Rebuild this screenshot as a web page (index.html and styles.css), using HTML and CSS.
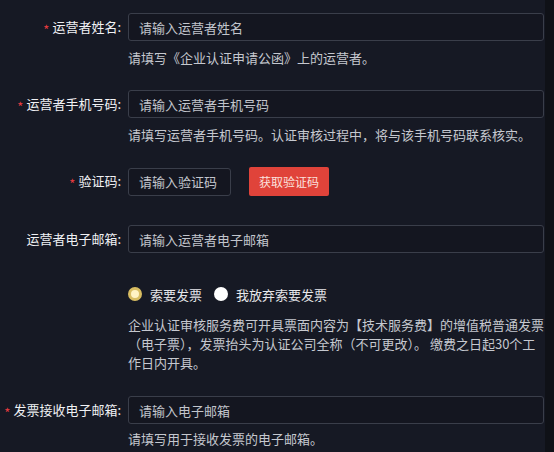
FILE: index.html
```html
<!DOCTYPE html>
<html lang="zh-CN">
<head>
    <meta charset="UTF-8">
    <meta name="viewport" content="width=device-width, initial-scale=1.0">
    <title>企业认证</title>
    <link rel="stylesheet" href="styles.css">
</head>
<body>
    <div class="page">
        <form class="form">
            <!-- 运营者姓名 -->
            <div class="form-item">
                <label class="form-label"><span class="required">*</span>运营者姓名:</label>
                <div class="form-control">
                    <input type="text" class="input" placeholder="请输入运营者姓名">
                    <div class="help">请填写《企业认证申请公函》上的运营者。</div>
                </div>
            </div>

            <!-- 手机号码 -->
            <div class="form-item">
                <label class="form-label"><span class="required">*</span>运营者手机号码:</label>
                <div class="form-control">
                    <input type="text" class="input" placeholder="请输入运营者手机号码">
                    <div class="help">请填写运营者手机号码。认证审核过程中，将与该手机号码联系核实。</div>
                </div>
            </div>

            <!-- 验证码 -->
            <div class="form-item item-code">
                <label class="form-label"><span class="required">*</span>验证码:</label>
                <div class="form-control code-row">
                    <input type="text" class="input input-code" placeholder="请输入验证码">
                    <button type="button" class="btn-code">获取验证码</button>
                </div>
            </div>

            <!-- 电子邮箱 -->
            <div class="form-item item-email">
                <label class="form-label">运营者电子邮箱:</label>
                <div class="form-control">
                    <input type="text" class="input" placeholder="请输入运营者电子邮箱">
                </div>
            </div>

            <!-- 发票 -->
            <div class="form-item item-invoice">
                <div class="form-label"></div>
                <div class="form-control">
                    <div class="radio-group">
                        <label class="radio"><span class="radio-dot checked"></span>索要发票</label>
                        <label class="radio"><span class="radio-dot"></span>我放弃索要发票</label>
                    </div>
                    <div class="invoice-note">企业认证审核服务费可开具票面内容为【技术服务费】的增值税普通发票（电子票），发票抬头为认证公司全称（不可更改）。 缴费之日起30个工作日内开具。</div>
                </div>
            </div>

            <!-- 发票邮箱 -->
            <div class="form-item">
                <label class="form-label"><span class="required">*</span>发票接收电子邮箱:</label>
                <div class="form-control">
                    <input type="text" class="input" placeholder="请输入电子邮箱">
                    <div class="help help-last">请填写用于接收发票的电子邮箱。</div>
                </div>
            </div>
        </form>
    </div>
</body>
</html>
```

FILE: styles.css
```css
body {
    margin: 0;
    background-color: #0f1117; /* dunkler Rand rechts */
    font-family: "Noto Sans CJK SC", "Noto Sans", sans-serif;
    font-size: 13px;
    color: #e6e7ea;
}

.page {
    width: 545px;
    min-height: 452px;
    background-color: #161924;
    box-sizing: border-box;
    padding-top: 13px;
}

.form-item {
    display: flex;
    align-items: flex-start;
    margin-bottom: 22px;
}

.form-label {
    width: 128px;
    flex-shrink: 0;
    box-sizing: border-box;
    padding-right: 7px;
    text-align: right;
    line-height: 28px;
    color: #f0f1f4;
    white-space: nowrap;
}

.required {
    display: inline-block;
    color: #e23a3f;
    font-size: 13px;
    line-height: 13px;
    vertical-align: -3px;
    margin-right: 3px;
}

.form-control {
    width: 416px;
}

.input {
    display: block;
    width: 100%;
    height: 28px;
    box-sizing: border-box;
    padding: 0 10px;
    border: 1px solid #3a3e4a;
    border-radius: 3px;
    background-color: #141620;
    color: #e6e7ea;
    font-family: inherit;
    font-size: 13px;
    outline: none;
}

.input::placeholder {
    color: #c2c5cc;
}

.help {
    margin-top: 7px;
    line-height: 20px;
    color: #c5c8cf;
}

.help-last {
    margin-top: 5px;
}

/* Verifizierungscode */
.item-code {
    margin-bottom: 29px;
}

.code-row {
    display: flex;
    align-items: center;
    gap: 18px;
}

.input-code {
    width: 103px;
}

.btn-code {
    width: 80px;
    height: 29px;
    border: none;
    border-radius: 2px;
    background-color: #e0433a;
    color: #fbe1dd;
    font-family: inherit;
    font-size: 12px;
    cursor: pointer;
}

.item-email {
    margin-bottom: 31px;
}

/* Rechnung */
.item-invoice {
    margin-bottom: 24px;
}

.radio-group {
    display: flex;
    align-items: center;
    gap: 12px;
    height: 20px;
}

.radio {
    display: flex;
    align-items: center;
    gap: 8px;
    color: #e6e7ea;
    cursor: pointer;
}

.radio-dot {
    width: 14px;
    height: 14px;
    border-radius: 50%;
    background-color: #ffffff;
    box-sizing: border-box;
}

.radio-dot.checked {
    background-color: #fff3c4;
    border: 3px solid #d8bd62;
}

.invoice-note {
    margin-top: 11px;
    line-height: 19px;
    color: #c5c8cf;
}
```
